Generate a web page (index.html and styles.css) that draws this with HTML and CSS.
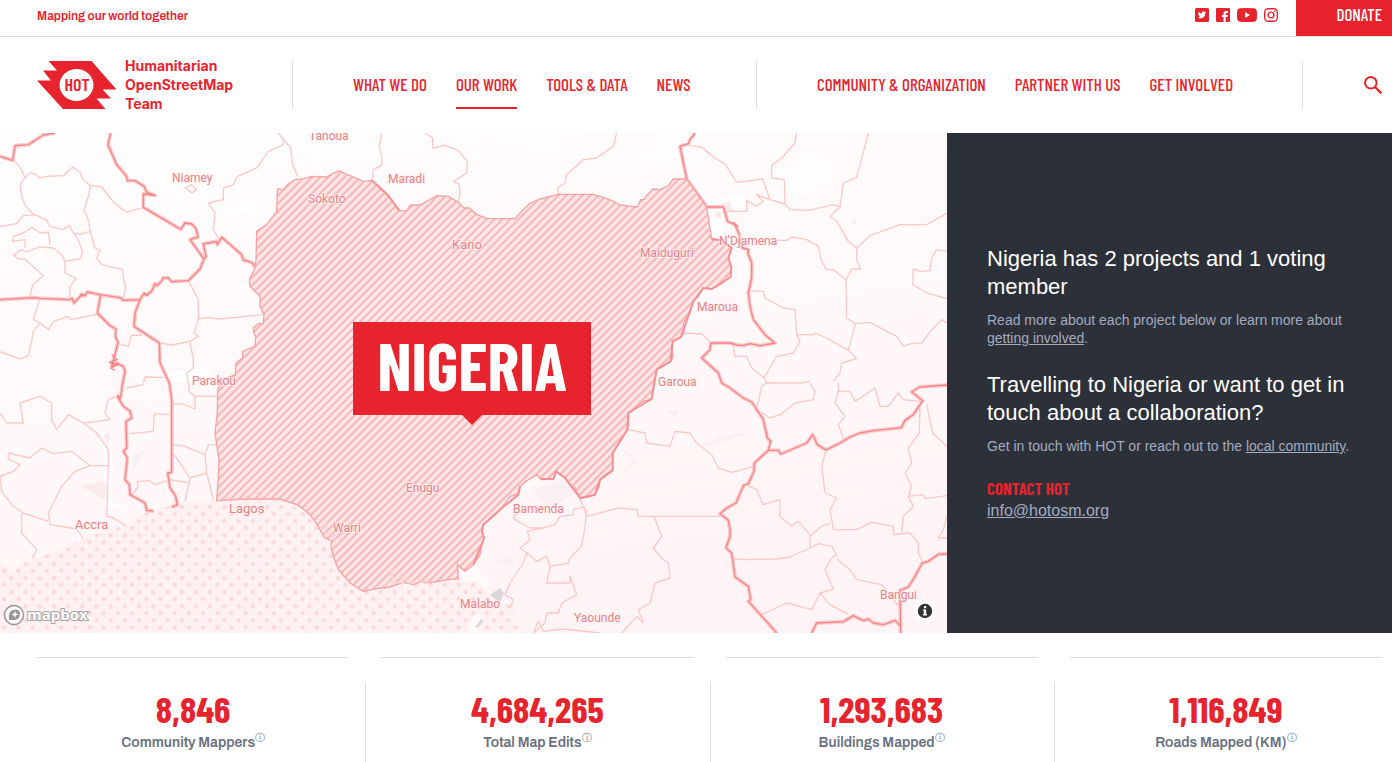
FILE: index.html
```html
<!DOCTYPE html>
<html lang="en">
<head>
<meta charset="utf-8">
<meta name="viewport" content="width=device-width, initial-scale=1">
<title>Nigeria | Humanitarian OpenStreetMap Team</title>
<link rel="stylesheet" href="styles.css">
</head>
<body>
<div class="topbar">
  <p class="tagline">Mapping our world together</p>
  <div class="social">
    <a href="#" aria-label="Twitter"><svg width="14" height="14" viewBox="0 0 14 14"><rect width="14" height="14" rx="1.5" fill="#e7242d"/><path d="M11.2 4.1l-1 .3.7-.9-1.1.4A1.7 1.7 0 0 0 6.900 5.500Q4.800 5.400 3.300 3.700Q2.700 5.100 3.900 6.100L3.100 5.900Q3.200 7.200 4.500 7.600L3.700 7.700Q4.200 8.700 5.400 8.800Q4.300 9.700 2.700 9.500Q5.600 11.200 8.300 9.600Q10.300 8.200 10.300 5.200Z" fill="#fff"/></svg></a>
    <a href="#" aria-label="Facebook"><svg width="14" height="14" viewBox="0 0 14 14"><rect width="14" height="14" rx="1" fill="#e7242d"/><path d="M7.500 14V9H6V7h1.500V5.500Q7.500 3 10 3h1.900v2h-1.200q-1 0-1 .9V7h2.100l-.3 2H9.700v5z" fill="#fff"/></svg></a>
    <a href="#" aria-label="YouTube"><svg width="20" height="14" viewBox="0 0 20 14"><path d="M3 .3Q10-.3 17 .3Q19.600.5 19.800 3Q20.200 7 19.800 11Q19.600 13.500 17 13.700Q10 14.300 3 13.700Q.4 13.500.2 11Q-.2 7 .2 3Q.4.500 3 .3Z" fill="#e7242d"/><path d="M8 4l5 3-5 3z" fill="#fff"/></svg></a>
    <a href="#" aria-label="Instagram"><svg width="14" height="14" viewBox="0 0 14 14" fill="none" stroke="#e7242d" stroke-width="1.400"><rect x=".7" y=".7" width="12.600" height="12.600" rx="3.500"/><circle cx="7" cy="7" r="2.900"/><circle cx="10.800" cy="3.200" r=".8" fill="#e7242d" stroke="none"/></svg></a>
  </div>
  <a class="donate" href="#">DONATE</a>
</div>
<header class="header">
  <a class="logo" href="#">
    <svg width="80" height="48" viewBox="0 0 80 48"><path d="M11.500 0H54.500L79.500 28.500H65.500L74 37.500H59.500L68.500 48H26L0 19.500H14L6 9.500H20Z" fill="#e7242d"/><ellipse cx="39.500" cy="24" rx="17" ry="16" fill="#fff"/><text class="logo-hot" x="40" y="30" text-anchor="middle">HOT</text></svg>
    <span class="logo-name">Humanitarian<br>OpenStreetMap<br>Team</span>
  </a>
  <nav class="nav nav-main" aria-label="Main">
    <a href="#">WHAT WE DO</a><a class="current" href="#">OUR WORK</a><a href="#">TOOLS &amp; DATA</a><a href="#">NEWS</a>
  </nav>
  <nav class="nav nav-org" aria-label="Organization">
    <a href="#">COMMUNITY &amp; ORGANIZATION</a><a href="#">PARTNER WITH US</a><a href="#">GET INVOLVED</a>
  </nav>
  <div class="search"><button type="button" aria-label="Search"><svg width="18" height="18" viewBox="0 0 18 18" fill="none" stroke="#e7242d" stroke-width="2"><circle cx="6.800" cy="6.800" r="5.800"/><path d="M11 11l6.300 6.300" stroke-width="2.400"/></svg></button></div>
</header>
<main>
<section class="hero">
  <div class="map">
    <svg class="map-art" viewBox="0 0 947 500" preserveAspectRatio="xMidYMid slice" role="img" aria-label="Map of Nigeria">
      <defs>
        <linearGradient id="land" x1="0" y1="0" x2="0.300" y2="1"><stop offset="0" stop-color="#fffdfd"/><stop offset=".4" stop-color="#fffafa"/><stop offset="1" stop-color="#fff4f5"/></linearGradient>
        <pattern id="dots" width="42.600" height="42.600" patternUnits="userSpaceOnUse"><rect width="42.600" height="42.600" fill="#fff1f1"/><circle cx="34" cy="14" r="6.500" fill="#fcd8d9"/><circle cx="13" cy="35" r="6.500" fill="#fcd8d9"/></pattern>
        <pattern id="hatch" width="17" height="17" patternUnits="userSpaceOnUse" patternTransform="rotate(-45)"><rect width="17" height="17" fill="#fde6e6"/><rect y="5" width="17" height="6" fill="#f6b5b7"/></pattern>
        <g id="national">
          <path d="M0 70L38 82L45 38L85 35L130 6L165 0M332 0L324 35L350 95L380 130L382 143L405 143L432 160L440 178L465 187L430 183V223L542 289L555 270L575 273L588 287L594 312L570 320L612 378L600 408L565 443L515 446L505 435L490 434L484 445L470 458L465 452L455 475L440 485L430 484L420 500L370 502L360 494L302 485L285 482L262 477L255 488L246 484L222 510L216 496L210 500L120 496L100 494L0 500M612 378L618 370L610 333L650 325L652 335L665 313L725 365L730 381L755 388L768 405M302 485L292 540L330 578L348 588L346 610L354 628L342 675L335 700L350 690L370 700L375 715L368 750L362 792L353 792L370 820L390 835L395 855L378 865L380 945L370 955L382 975L375 1040L388 1055L390 1085L435 1110L440 1132L460 1134M420 500L405 540L402 580L478 630L480 690L508 750L515 800V1018L503 1020L510 1065L527 1090L532 1116L515 1122"/>
          <path d="M2085 0L2070 20L2065 32L2040 40L2060 138L2120 222H2170L2183 265L2205 275L2218 305L2220 325L2228 345L2245 350L2244 362L2255 390L2255 435L2245 480L2250 520L2260 560L2295 605L2325 630L2280 638L2250 632L2230 638L2210 636L2190 630H2132L2130 650L2105 675L2155 720L2165 750L2190 765L2230 795L2255 807L2290 860L2302 915L2312 925L2305 952L2335 952L2343 963L2420 930L2438 905L2452 935L2478 951L2500 940L2520 930L2550 912L2580 900L2620 893L2704 884L2715 862L2740 845L2768 803L2735 777L2758 762L2841 756M2305 952L2263 990L2262 1015L2245 1052L2230 1058L2208 1110L2180 1125L2160 1142L2185 1162L2190 1190V1210L2178 1245L2195 1260L2205 1332L2245 1360L2252 1400L2245 1405L2330 1500M2841 1263L2815 1264L2785 1285L2767 1290L2745 1330L2725 1362L2700 1372L2702 1500M2435 1500L2450 1470L2530 1466L2560 1448L2590 1463L2605 1458L2620 1470L2650 1475L2685 1462L2702 1480"/>
        </g>
        <path id="country" d="M832 168L848 170L865 153L885 140L912 137L935 130L980 132L1000 120L1018 114L1090 145L1115 142L1140 162L1165 188L1198 233L1220 232L1232 216L1260 216L1310 188L1345 190L1375 208L1392 225L1408 225L1430 244L1460 256L1545 257L1560 240L1590 210L1620 198L1675 184L1780 184L1830 200L1860 216L1912 222L1922 200L1932 200L1942 185L1960 168L1980 170L2005 158L2020 138H2060L2120 222L2135 318L2165 322L2195 345L2185 375L2194 402L2192 432L2160 455L2135 468L2110 465L2095 490L2080 505L2070 540L2050 570L2052 595L2043 612L2018 625L2015 650L2020 670L2012 685L1970 710L1965 735L1958 770L1955 798L1930 805L1910 820L1885 840L1886 870L1882 890L1860 925L1848 945L1838 960L1838 1012L1815 1025L1800 1040L1798 1060L1785 1085L1762 1093L1740 1095L1725 1065L1710 1055L1695 1035L1668 1015L1660 1038L1622 1040L1612 1025L1580 1043L1560 1060L1555 1085L1530 1090L1520 1105L1500 1130L1450 1175L1446 1195L1452 1215L1445 1240L1440 1265L1420 1295L1395 1315L1372 1295L1375 1338L1345 1340L1285 1350L1265 1345L1240 1355L1210 1348L1170 1362L1130 1367L1090 1375L1050 1350L1015 1310L1000 1270L992 1240L995 1225L975 1215L960 1190L945 1165L930 1145L910 1128L890 1115L840 1098L740 1098L650 1103L655 1030L657 980L645 900L652 840L653 770L668 740L706 725L707 690L728 675V655L765 640L767 610L762 600L760 585L775 572H790L792 545L780 520V490L750 460L748 440L765 405L768 380L770 295L800 275L830 235Z"/>
      </defs>
      <rect width="947" height="500" fill="url(#land)"/>
      <g transform="scale(.333333)">
        <path d="M480 0H900V60L760 90L560 60ZM1990 0H2110L2060 70L1900 100ZM1500 0H1700L1630 60L1580 40ZM2300 150L2420 60L2520 90L2480 150L2400 200Z" fill="#fff" opacity=".6"/>
        <path d="M686 230L710 220L720 230L700 245ZM730 240L745 218L765 215V240ZM500 720L620 700L650 735L530 750ZM310 900L330 910L340 1000L325 1100L400 1140L315 1115ZM2060 220L2240 180L2230 225L2140 235ZM2130 240L2165 235L2170 300L2140 290Z" fill="#fff"/>
        <path d="M240 1058L315 1045L325 1070L310 1100ZM310 905L330 900L325 945ZM2160 210L2190 205L2200 235L2175 240ZM2145 238L2160 236L2165 255H2150ZM2555 255L2568 262V275L2558 270Z" fill="#fcebec"/>
        <path d="M2000 835L2040 830L2025 855ZM2105 940L2160 910L2250 898L2190 920ZM1860 950L1890 960L1910 990L1870 1015L1900 985ZM1600 1070L1700 1040L1730 1080L1640 1130ZM400 965L440 945L395 1025ZM1490 1280L1540 1270V1300Z" fill="#ebe6e7" opacity=".35"/>
        <path d="M0 1290L35 1313L100 1275L165 1258L200 1245L250 1218L330 1185L395 1180L400 1155L460 1130L540 1112L650 1103L840 1098L930 1145L992 1240L1015 1310L1090 1375L1375 1338L1400 1345L1450 1340L1475 1390L1510 1415L1540 1410L1545 1460L1590 1500H0Z" fill="url(#dots)"/>
        <path d="M1400 1500L1420 1450L1440 1440L1452 1455L1430 1500ZM1375 1320L1420 1295L1470 1340L1460 1370L1430 1345H1400Z" fill="#fff9f9"/>
        <path d="M1470 1385L1500 1365L1512 1380L1500 1410ZM1425 1482L1445 1455L1450 1465L1435 1485Z" fill="#cdcbcb" opacity=".7"/>
        <g class="districts">
          <path d="M45 85L60 103L75 133L60 155L65 190L75 215L100 245M75 133L90 119L108 125L120 135L140 130L190 128L218 102L240 118L250 140L272 158L265 190L252 232L265 260L272 300L285 345L300 352L290 375L305 395L368 410L370 435L377 465L370 495M272 158L305 162L340 207L378 238L430 223M0 280L50 272L70 248L105 245L140 262L150 280L190 290L208 278L220 300L240 304L270 295M220 300L235 320L248 358L240 378L195 385L185 365L160 345L118 342L80 357L65 350L40 367L55 378L75 378L130 428L98 455L90 492L120 497M195 385V420L228 435L210 462L208 500M70 300L95 283L122 300L145 297L150 335M70 300L40 310L38 325L75 320V345M120 497L100 560L120 570L100 595L95 625L85 668L60 678L0 656M120 570L145 590L160 565L205 550L212 560L290 545M565 443L595 500V560L582 600L595 610L570 625L515 636L480 630M595 560L620 553L660 558L790 545M570 625L580 680V705L560 720L565 750M402 580L425 607H395L385 640L350 632M430 750L435 732L490 733"/>
          <path d="M835 0L850 18V35L805 55L770 105L712 130L700 155L670 165V200L625 210L645 240L640 290L655 315M850 18L872 45L878 95L893 130M557 165L575 155L590 170L575 180ZM1145 0L1138 40L1145 70V97L1120 110L1117 140M1275 0L1298 15V45L1335 37L1375 53L1402 85L1400 120L1360 145L1378 155L1380 180L1375 205M1850 0L1840 40L1790 75L1750 80L1700 125L1695 150L1673 165L1675 184"/>
          <path d="M2065 38L2105 42L2140 73L2175 93L2210 148L2288 138L2310 200L2270 185L2290 205L2270 220L2240 203V235H2180M2390 0L2385 30L2345 75L2315 98V135L2353 140L2355 213L2310 200M2355 213L2370 230L2425 232L2500 215L2520 222L2530 150L2570 133L2605 0M2520 222L2490 250L2510 265L2545 325L2570 345L2570 380L2582 408L2555 408L2538 440L2500 410H2480L2465 385L2455 340L2420 320L2375 312L2362 322H2330M2570 345L2610 308L2700 275H2780L2841 240M2841 355L2810 350L2795 375L2790 412L2760 415L2740 408L2738 455L2780 480L2841 497M2538 440L2540 555L2566 572L2545 652L2480 615L2445 600L2440 605H2390L2385 530L2350 525L2295 495L2290 475L2250 473M2390 605L2400 625L2380 660L2330 670L2292 735L2255 705L2240 670H2205L2200 640M2292 735L2300 750M2545 652L2570 677L2525 690L2520 720L2500 745M2566 572L2610 568L2690 610L2710 640L2730 632L2765 630L2795 590L2825 560L2841 570M2043 612L2055 600L2105 603L2135 630"/>
          <path d="M0 840L20 870L70 870L60 810L120 790L155 810L155 860L170 890L205 845L250 870L330 860L315 840L325 800L350 790M250 870L290 900L325 950V1000L320 1150L340 1155L380 1180M25 960L90 975L125 945L160 962L215 955L270 998H325M270 998L225 1015L185 1060L145 1140L150 1175L230 1188L250 1218M25 960V978L60 995L40 1015L0 1030L5 1075L40 1120L70 1140L145 1165M65 1140V1200L110 1250L97 1275M388 902L460 895L463 842L508 845M380 765L430 755M515 815L545 812L585 828V790H650M567 750V775L585 790M515 935L555 940L615 965L620 1020L570 1035L540 990L522 965M570 1035L555 1105M615 965L625 935H650M620 1020L640 1100M400 1080L415 1060L412 1045L450 1043L465 1055L510 1040L570 1050"/>
          <path d="M1725 1065L1750 1120L1760 1150L1855 1125L1910 1130L1915 1150H2160M1755 1120L1720 1130V1145L1680 1150L1665 1175L1630 1185H1590L1545 1160L1540 1150L1560 1135M1760 1130L1755 1180L1745 1240L1710 1275L1705 1290L1650 1300L1640 1270L1610 1285L1580 1260L1560 1245L1590 1220L1582 1195L1630 1185M1560 1245L1580 1260L1570 1290L1530 1350L1515 1385L1540 1400L1530 1425M1650 1300L1640 1350L1710 1350V1330L1730 1385L1685 1410L1675 1440L1640 1440L1635 1470L1600 1500M1600 1500L1615 1465L1630 1495L1690 1488L1800 1500M1882 890L1935 900L1940 930L2010 940L2025 895L2070 900L2090 930L2135 965L2155 1005L2195 1018L2262 1000"/>
          <path d="M1962 1150L1985 1210L1960 1245L1985 1275L2005 1290L2010 1335L1965 1350L1950 1410L1915 1430L1930 1470L1910 1450L1865 1500M2300 750L2285 760L2270 830L2310 855L2345 843L2385 810L2440 800L2445 775L2430 750M2300 750H2400L2430 745M2515 750V775L2505 810L2535 850L2515 875L2530 915M2515 775L2550 775L2565 805L2625 765L2640 820H2665L2695 780L2710 800L2760 805M2478 951L2465 1000L2475 1080L2510 1095L2490 1130L2500 1190H2570L2615 1168L2680 1180V1205L2730 1200L2755 1230V1260L2767 1285M2760 815L2758 900L2725 945L2735 990L2715 1020L2735 1060L2725 1090L2740 1120L2710 1150L2705 1200M2725 1090L2770 1085L2775 1097L2841 1088M2780 815L2798 900L2841 940M2245 1058L2270 1070L2290 1115L2340 1100V1150L2375 1180L2395 1165L2430 1205V1245L2370 1272L2330 1278L2240 1280L2200 1278M2430 1210L2465 1180L2490 1172M2430 1245L2455 1232L2495 1240L2510 1265L2495 1275L2475 1310L2500 1368L2460 1380L2435 1430L2360 1410L2285 1445M2510 1278L2550 1310L2570 1340L2645 1355L2700 1425M2460 1380L2490 1415L2545 1445M2841 1150L2830 1190L2815 1215H2841"/>
        </g>
        <use href="#national" class="border-halo"/><use href="#national" class="border-line"/>
        <path d="M335 665L352 680L328 688L355 695L332 705L345 712M352 785L362 800M240 484L250 490M430 478L445 490M2200 268L2215 282M450 184L466 188" class="border-line"/>
        <use href="#country" fill="url(#hatch)" class="country"/>
        <path d="M1115 142L1165 188L1198 233M1560 1060L1555 1085L1500 1130L1450 1175L1446 1195L1452 1215L1420 1295M2135 318L2165 322L2195 345L2185 375L2194 402L2192 432L2135 468L2110 465L2080 505L2043 612L2018 625L2012 685L1970 710L1955 798L1885 840L1882 890L1838 960V1012L1800 1040L1785 1085L1740 1095L1695 1035L1668 1015L1660 1038H1622" class="country-edge"/>
        <path d="M735 1098L745 1085L770 1080L790 1072M960 1190L980 1170L975 1200L1005 1205L990 1220L1025 1215L1010 1235L990 1240M1150 1360L1170 1340L1175 1305L1180 1355L1205 1320V1355L1220 1330L1230 1355L1255 1335L1270 1350H1290" class="creek"/>
      </g>
      <g class="cities">
        <text x="309" y="7">Tahoua</text><text x="172" y="49">Niamey</text><text x="388" y="50">Maradi</text><text x="308" y="70">Sokoto</text><text x="452" y="116" class="big">Kano</text><text x="640" y="124">Maiduguri</text><text x="719" y="112">N’Djamena</text><text x="697" y="178">Maroua</text><text x="658" y="253">Garoua</text><text x="192" y="252">Parakou</text><text x="406" y="359">Enugu</text><text x="229" y="380" class="big">Lagos</text><text x="333" y="399">Warri</text><text x="513" y="380">Bamenda</text><text x="75" y="396" class="big">Accra</text><text x="460" y="475">Malabo</text><text x="574" y="489">Yaounde</text><text x="880" y="466">Bangui</text>
      </g>
    </svg>
    <h1 class="country-name">NIGERIA</h1>
    <a class="mapbox" href="#" aria-label="Mapbox"><svg width="92" height="24" viewBox="0 0 92 24"><circle cx="11" cy="12" r="9.500" fill="#fff" stroke="#9a9494" stroke-width="1.500"/><path d="M6 17Q5 8 10 7Q16 5 17 10Q17 16 12 17Z" fill="#9a9494"/><path d="M12 8l1 2.500 2.500 1-2.500 1-1 2.500-1-2.500-2.500-1 2.500-1z" fill="#fff"/><text x="24" y="17">mapbox</text></svg></a>
    <button class="attribution" type="button" aria-label="Map attribution"><svg width="24" height="24" viewBox="0 0 24 24"><circle cx="12" cy="12" r="7.200" fill="#333"/><path d="M11 7h2.200v2.200H11zM10.200 10.500h3V15h.8v1.500h-4V15h.8v-3h-.6z" fill="#fff"/></svg></button>
  </div>
  <aside class="panel">
    <h2>Nigeria has 2 projects and 1 voting member</h2>
    <p>Read more about each project below or learn more about <a href="#">getting involved</a>.</p>
    <h2>Travelling to Nigeria or want to get in touch about a collaboration?</h2>
    <p>Get in touch with HOT or reach out to the <a href="#">local community</a>.</p>
    <h3>CONTACT HOT</h3>
    <a class="email" href="mailto:info@hotosm.org">info@hotosm.org</a>
  </aside>
</section>
<section class="stats" aria-label="Statistics">
  <div class="stat"><div class="stat-body"><strong>8,846</strong><span>Community Mappers<sup>ⓘ</sup></span></div></div>
  <div class="stat"><div class="stat-body"><strong>4,684,265</strong><span>Total Map Edits<sup>ⓘ</sup></span></div></div>
  <div class="stat"><div class="stat-body"><strong>1,293,683</strong><span>Buildings Mapped<sup>ⓘ</sup></span></div></div>
  <div class="stat"><div class="stat-body"><strong>1,116,849</strong><span>Roads Mapped (KM)<sup>ⓘ</sup></span></div></div>
</section>
</main>
</body>
</html>
```
FILE: styles.css
```css
:root {
  --red: #e7242d;
  --line: #dedede;
  --dark: #2c3038;
  --condensed: "Barlow Condensed", "Liberation Sans Narrow", "Roboto Condensed", sans-serif;
  --body: Archivo, "Liberation Sans", sans-serif;
}
* { box-sizing: border-box; }
body { margin: 0; background: #fff; color: var(--red); font-family: var(--body); overflow-x: hidden; }
a { color: inherit; text-decoration: none; }
button { border: 0; padding: 0; background: none; cursor: pointer; }
svg { display: block; }
h1, h2, h3, p { margin: 0; }

.topbar { display: flex; height: 37px; padding-left: 37px; border-bottom: 1px solid var(--line); line-height: 32px; }
.tagline { flex: 1; font-size: 12px; font-weight: 600; }
.social { display: flex; gap: 7px; align-items: center; height: 30px; margin-right: 18px; }
.donate { padding: 0 10px 0 40px; background: var(--red); color: #fff; font: 500 17px/29px var(--condensed); }

.header { display: flex; height: 96px; padding: 24px 10px 24px 37px; }
.logo { display: flex; flex: 0 0 255px; gap: 8px; }
.logo-name { font: 700 14px/19px Inter, sans-serif; margin: -5px 0; }
.logo-hot { font: 600 18px var(--condensed); fill: var(--red); }
.nav { display: flex; gap: 29px; padding-left: 60px; border-left: 1px solid var(--line); height: 48px; }
.nav-main { flex: 1 1 464px; }
.nav-org { flex: 1 1 546px; }
.nav a { font: 500 17px/46px var(--condensed); white-space: nowrap; }
.nav a.current { border-bottom: 2px solid var(--red); }
.search { display: flex; flex: 0 0 80px; justify-content: flex-end; align-items: center; border-left: 1px solid var(--line); }

.hero { display: flex; min-height: 500px; }
.map { position: relative; flex: 1; overflow: hidden; display: flex; align-items: center; justify-content: center; }
.map-art { position: absolute; inset: 0; width: 100%; height: 100%; }
.country-name { position: relative; width: 238px; margin: 0 3px 30px 0; padding-bottom: 9px; background: var(--red); color: #fff; font: 700 67px/84px var(--condensed); text-align: center; }
.country-name::after { content: ""; position: absolute; top: 100%; left: 50%; margin-left: -10px; border: 10px solid transparent; border-top-color: var(--red); border-bottom: 0; }
.districts { fill: none; stroke: #fcc8ca; stroke-width: 4; stroke-linejoin: round; }
.border-halo { fill: none; stroke: #fccdce; stroke-width: 12; stroke-linejoin: round; }
.border-line { fill: none; stroke: #f78488; stroke-width: 4; stroke-linejoin: round; }
.country { stroke: #f7a3a6; stroke-width: 4; }
.country-edge { fill: none; stroke: #f79094; stroke-width: 6; stroke-linejoin: round; }
.creek { fill: none; stroke: #fbd5d6; stroke-width: 4; }
.cities { font: 12px Roboto, sans-serif; fill: #ec8287; paint-order: stroke; stroke: #fff3f3; stroke-width: 2px; stroke-opacity: .7; }
.cities .big { font-size: 13px; }
.mapbox { position: absolute; left: 3px; bottom: 6px; }
.mapbox text { font: 700 15px "Open Sans", sans-serif; fill: #fff; stroke: #aaa3a3; stroke-width: 2px; paint-order: stroke; }
.attribution { position: absolute; right: 10px; bottom: 10px; border-radius: 12px; background: rgba(255, 255, 255, .6); }

.panel { flex: 0 0 445px; display: flex; flex-direction: column; justify-content: center; align-items: flex-start; padding: 0 40px; background: var(--dark); color: #a5abc0; font-family: "Liberation Sans", sans-serif; }
.panel h2 { margin-bottom: 10px; color: #fff; font-size: 22px; line-height: 28px; font-weight: 400; }
.panel p { margin-bottom: 24px; font-size: 14px; line-height: 18px; }
.panel p a, .email { text-decoration: underline; }
.panel h3 { color: var(--red); font: 700 17px/18px var(--condensed); margin-bottom: 4px; }
.email { font-size: 16px; line-height: 20px; }

.stats { display: grid; grid-template-columns: repeat(4, 1fr); gap: 32px; padding: 24px 10px 0 37px; }
.stat { border-top: 1px solid var(--line); padding-top: 24px; }
.stat-body { position: relative; display: flex; flex-direction: column; align-items: center; height: 80px; padding-top: 4px; }
.stat:not(:last-child) .stat-body::after { content: ""; position: absolute; top: 0; bottom: 0; right: -17px; width: 1px; background: var(--line); }
.stat strong { margin-bottom: 3px; font: 700 37px/44px var(--condensed); }
.stat span { color: #68707f; font-size: 14px; line-height: 20px; font-weight: 600; }
.stat sup { font: 10px/1 "DejaVu Sans", sans-serif; }
```
